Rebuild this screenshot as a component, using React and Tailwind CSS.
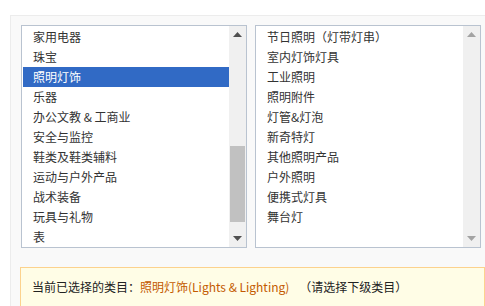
import React from "react";

const left = ["家用电器","珠宝","照明灯饰","乐器","办公文教 & 工商业","安全与监控","鞋类及鞋类辅料","运动与户外产品","战术装备","玩具与礼物","表"];
const right = ["节日照明（灯带灯串）","室内灯饰灯具","工业照明","照明附件","灯管&灯泡","新奇特灯","其他照明产品","户外照明","便携式灯具","舞台灯"];

function ListBox({ items, selected, active }) {
  const arrow = active ? "#505050" : "#a3a3a3";
  return (
    <div className="flex w-[226px] h-[223px] border border-[#b9c3d0] bg-white">
      <div className="flex-1 pl-px pt-px overflow-hidden">
        {items.map((t, i) => (
          <div
            key={i}
            className={
              "h-[20px] leading-[20px] pl-[10px] whitespace-nowrap text-[12px] " +
              (i === selected ? "bg-[#316ac5] text-white" : "text-[#333]")
            }
          >
            {t}
          </div>
        ))}
      </div>
      <div className="w-[17px] bg-[#f0f0f0] flex flex-col items-center">
        <div className="h-[17px] flex items-center justify-center">
          <svg width="9" height="5" viewBox="0 0 9 5"><path d="M4.5 0 L9 5 L0 5 Z" fill={arrow} /></svg>
        </div>
        <div className="flex-1 w-full px-px py-px flex flex-col">
          {active ? (
            <>
              <div className="h-[102px]" />
              <div className="h-[76px] bg-[#c1c1c1] w-[15px]" />
            </>
          ) : null}
        </div>
        <div className="h-[17px] flex items-center justify-center">
          <svg width="9" height="5" viewBox="0 0 9 5"><path d="M0 0 L9 0 L4.5 5 Z" fill={arrow} /></svg>
        </div>
      </div>
    </div>
  );
}

export default function App() {
  return (
    <div
      className="w-[485px] h-[306px] bg-white overflow-hidden pt-[15px] pl-[10px]"
      style={{ fontFamily: '"Noto Sans CJK SC", "Noto Sans", sans-serif' }}
    >
      <div className="h-[300px] bg-[#f9f9f9] border-t border-l border-[#ececec] pt-[9px] pl-[10px]">
        <div className="flex gap-[8px]">
          <ListBox items={left} selected={2} active />
          <ListBox items={right} selected={-1} active={false} />
        </div>
        <div className="mt-[19px] -ml-px h-[60px] border border-[#fcd28d] bg-[#fffde6] pl-[11px] pt-[9px] text-[12px] leading-[20px] text-[#222] whitespace-nowrap">
          当前已选择的类目：<span className="text-[#c35a00]">照明灯饰(Lights &amp; Lighting)</span>
          <span className="ml-[10px]">（请选择下级类目）</span>
        </div>
      </div>
    </div>
  );
}
